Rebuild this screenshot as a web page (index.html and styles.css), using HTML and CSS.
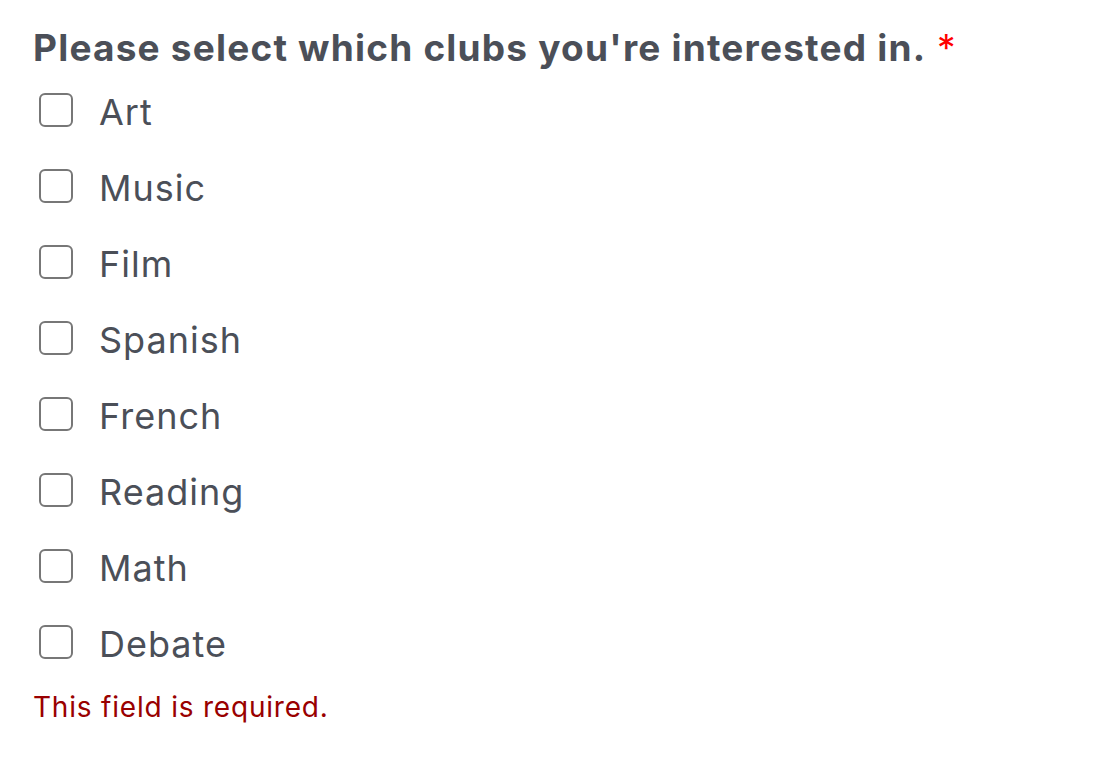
FILE: index.html
```html
<!DOCTYPE html>
<html>
<head>
<meta charset="utf-8">
<link rel="stylesheet" href="styles.css">
</head>
<body>
<div class="field">
  <div class="legend">Please select which clubs you're interested in. <span class="req">*</span></div>
  <ul class="choices">
    <li class="choice"><span class="box"></span><span class="label">Art</span></li>
    <li class="choice"><span class="box"></span><span class="label">Music</span></li>
    <li class="choice"><span class="box"></span><span class="label">Film</span></li>
    <li class="choice"><span class="box"></span><span class="label">Spanish</span></li>
    <li class="choice"><span class="box"></span><span class="label">French</span></li>
    <li class="choice"><span class="box"></span><span class="label">Reading</span></li>
    <li class="choice"><span class="box"></span><span class="label">Math</span></li>
    <li class="choice"><span class="box"></span><span class="label">Debate</span></li>
  </ul>
  <div class="error">This field is required.</div>
</div>
</body>
</html>
```
FILE: styles.css
```css
html, body {
  margin: 0;
  padding: 0;
  background: #ffffff;
}
body {
  font-family: Inter, "Noto Sans", sans-serif;
  color: #4b4f58;
}
.field {
  padding: 24px 0 0 33px;
}
.legend {
  font-size: 37px;
  font-weight: 700;
  line-height: 48px;
  letter-spacing: 1.2px;
  white-space: nowrap;
}
.req {
  color: #ff0000;
  font-weight: 400;
  margin-left: 2px;
}
.choices {
  list-style: none;
  margin: 0;
  padding: 0;
}
.choice {
  display: flex;
  align-items: center;
  height: 76px;
  padding-left: 6px;
}
.box {
  width: 30px;
  height: 30px;
  border: 2px solid #777777;
  border-radius: 6px;
  flex: none;
}
.label {
  margin-left: 26px;
  padding-top: 4px;
  font-size: 36px;
  letter-spacing: 1px;
  color: #4b4f58;
}
.error {
  font-size: 28px;
  line-height: 36px;
  letter-spacing: 0.8px;
  color: #990000;
  margin-top: 9px;
}
```
